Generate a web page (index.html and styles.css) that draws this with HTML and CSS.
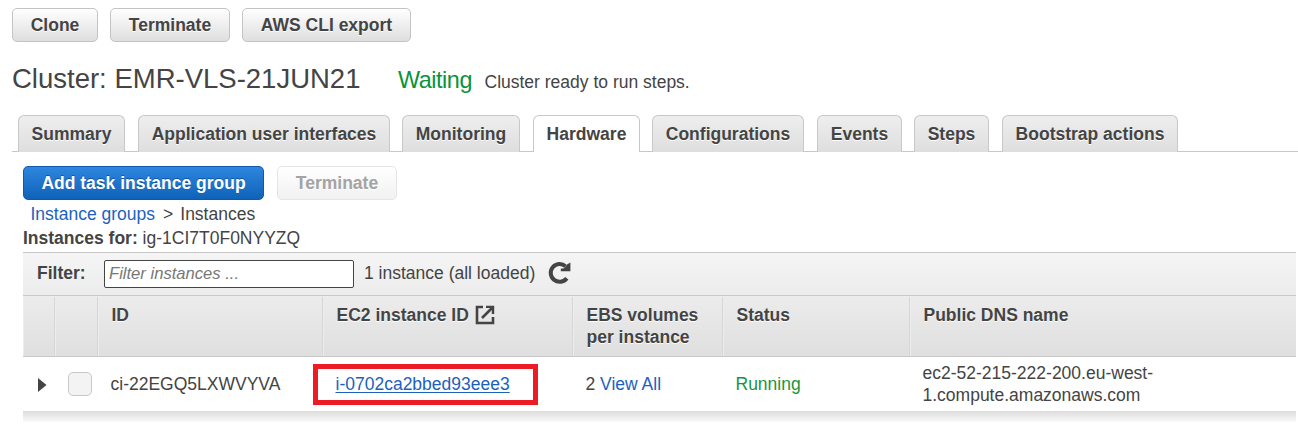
FILE: index.html
```html
<!DOCTYPE html>
<html lang="en">
<head>
<meta charset="utf-8">
<title>Cluster hardware</title>
<link rel="stylesheet" href="styles.css">
</head>
<body>
<div class="actions">
  <button class="btn clone"><span>Clone</span></button>
  <button class="btn terminate"><span>Terminate</span></button>
  <button class="btn export"><span>AWS CLI export</span></button>
</div>
<header class="heading">
  <h1>Cluster: EMR-VLS-21JUN21</h1>
  <span class="state">Waiting</span>
  <span class="message">Cluster ready to run steps.</span>
</header>
<nav class="tabs">
  <a class="tab t1">Summary</a>
  <a class="tab t2">Application user interfaces</a>
  <a class="tab t3">Monitoring</a>
  <a class="tab t4 active">Hardware</a>
  <a class="tab t5">Configurations</a>
  <a class="tab t6">Events</a>
  <a class="tab t7">Steps</a>
  <a class="tab t8">Bootstrap actions</a>
</nav>
<main class="panel">
  <div class="group-actions">
    <button class="btn primary">Add task instance group</button>
    <button class="btn terminate disabled" disabled>Terminate</button>
  </div>
  <div class="crumbs"><a class="link">Instance groups</a><span class="sep">&gt;</span><span>Instances</span></div>
  <div class="for"><b>Instances for:</b> ig-1CI7T0F0NYYZQ</div>
  <div class="filter">
    <label for="q">Filter:</label>
    <input id="q" class="search" placeholder="Filter instances ...">
    <span class="count">1 instance (all loaded)</span>
    <svg class="refresh" width="24" height="24" viewBox="0 0 24 24"><path d="M17.5 5.2A8.9 8.9 0 1 0 18.8 17.2" fill="none" stroke="#444" stroke-width="4"/><path d="M22.4 1.4v8.8h-9.6V7.8l3.2-.6 3.4-4z" fill="#444"/></svg>
  </div>
  <div class="grid head">
    <div class="cell"></div>
    <div class="cell"></div>
    <div class="cell">ID</div>
    <div class="cell ec2">EC2 instance ID<svg class="external" width="20" height="20" viewBox="0 0 20 20"><path d="M8 2H2v16h16v-6" fill="none" stroke="#444" stroke-width="2.6"/><path d="M7 13L17 3" stroke="#444" stroke-width="2.6"/><path d="M11 .8h8.2V9h-2.4V5l-2-2h-3.8z" fill="#444"/></svg></div>
    <div class="cell">EBS volumes<br>per instance</div>
    <div class="cell">Status</div>
    <div class="cell">Public DNS name</div>
  </div>
  <div class="grid row">
    <div class="cell expand"><svg width="9" height="14" viewBox="0 0 9 14"><path d="M0 0l8.5 7L0 14z" fill="#444"/></svg></div>
    <div class="cell pick"><span class="box"></span></div>
    <div class="cell">ci-22EGQ5LXWVYVA</div>
    <div class="cell marked"><a class="link hovered">i-0702ca2bbed93eee3</a></div>
    <div class="cell"><span>2 <a class="link">View All</a></span></div>
    <div class="cell running">Running</div>
    <div class="cell dns">ec2-52-215-222-200.eu-west-<br>1.compute.amazonaws.com</div>
  </div>
  <div class="table-end"></div>
</main>
</body>
</html>
```
FILE: styles.css
```css
* { box-sizing: border-box; }
body {
  margin: 0;
  padding: 8px 0 0 12px;
  height: 425px;
  overflow: hidden;
  background: #fff;
  color: #444;
  font: 17.5px/22px "Liberation Sans", Arial, sans-serif;
  white-space: nowrap;
}
.actions, .group-actions { display: flex; gap: 12px; }
.btn {
  height: 34px;
  padding: 0;
  border: 1px solid #c4c4c4;
  border-radius: 5px;
  background: linear-gradient(#fff, #dedede);
  color: #444;
  font: bold 17.5px/22px "Liberation Sans", Arial, sans-serif;
  text-shadow: 0 1px 0 #fff;
}
.clone { width: 86px; }
.terminate { width: 120px; }
.export { width: 169px; }
.heading {
  display: flex;
  align-items: baseline;
  height: 73px;
  padding-top: 20px;
}
h1 { margin: 0; width: 386px; font-size: 27.5px; line-height: 34px; font-weight: normal; }
.state { width: 86.5px; color: #0a9339; font-size: 23.4px; letter-spacing: -.45px; }
.tabs {
  display: flex;
  height: 37px;
  padding-left: 6px;
  background: linear-gradient(#c8c8c8, #c8c8c8) bottom / 100% 1px no-repeat;
}
.tab {
  height: 37px;
  margin-right: 12px;
  padding-top: 7px;
  border: 1px solid #c8c8c8;
  border-bottom: 0;
  border-radius: 6px 6px 0 0;
  background: linear-gradient(#eee, #dedede);
  font-weight: bold;
  text-align: center;
  text-shadow: 0 1px 0 #fff;
}
.tab.active { background: #fff; }
.t1 { width: 107px; margin-right: 13px; }
.t2 { width: 252px; }
.t3 { width: 118px; margin-right: 13px; }
.t4 { width: 107px; }
.t5 { width: 152px; margin-right: 13px; }
.t6 { width: 85px; }
.t7 { width: 75px; margin-right: 13px; }
.t8 { width: 176px; }
.panel { margin: 14px 2px 0 11px; }
.group-actions { gap: 13px; }
.primary {
  width: 241px;
  border-color: #1059a8;
  background: linear-gradient(#2e86df, #0f62b8);
  color: #fff;
  text-shadow: 0 -1px 0 #0f55a0;
}
.disabled { border-color: #e5e5e5; background: linear-gradient(#fff, #f1f1f1); color: #a3a3a3; }
.crumbs { display: flex; height: 24px; padding: 3px 0 0 7.5px; }
.sep { padding: 0 7px 0 8px; }
.for { height: 28px; padding-top: 3px; }
.link { color: #1c62bd; }
.filter {
  display: flex;
  align-items: center;
  height: 43px;
  padding-left: 14px;
  border-top: 1px solid #c8c8c8;
  background: linear-gradient(#f5f5f5, #ececec);
}
.filter label { width: 67px; padding-bottom: 2px; font-weight: bold; }
.search {
  width: 250px;
  height: 28px;
  padding: 0 4px;
  border: 1px solid #444;
  border-radius: 2px;
  background: #fff;
  font: italic 16.6px/22px "Liberation Sans", Arial, sans-serif;
}
.search::placeholder { color: #777; }
.count { width: 194px; padding: 0 0 2px 10px; }
.refresh { margin-bottom: 2px; }
.grid { display: grid; grid-template-columns: 32px 43px 225px 250px 150px 187px 1fr; }
.head {
  height: 62px;
  border: solid #c8c8c8;
  border-width: 1px 0;
  background: linear-gradient(#ececec, #dfdfdf);
  font-weight: bold;
  text-shadow: 0 1px 0 #fff;
}
.head .cell {
  padding: 7px 0 0 12.5px;
  margin-top: 1px;
  border-right: 1px solid #d6d6d6;
  border-left: 1px solid #ededed;
}
.head .cell:last-child { border-right: 0; }
.ec2 { display: flex; }
.external { margin: 1px 0 0 6px; }
.row { height: 54px; }
.row .cell { display: flex; align-items: center; padding-left: 12.5px; }
.row .expand { padding: 2px 0 0 15px; }
.row .pick { padding-left: 13px; }
.box {
  width: 24px;
  height: 24px;
  border: 1px solid #c8c8c8;
  border-radius: 5px;
  background: #f3f3f3;
}
.row .marked {
  width: 225px;
  height: 41px;
  margin: 7px 0 0 -10px;
  padding: 0 0 2px 17.5px;
  border: 5px solid #ed1c24;
}
.hovered { text-decoration: underline; text-decoration-thickness: 1px; text-underline-offset: 2px; }
.running { color: #1b9440; }
.table-end { height: 11px; background: linear-gradient(#dcdcdc, #fafafa); }
```
